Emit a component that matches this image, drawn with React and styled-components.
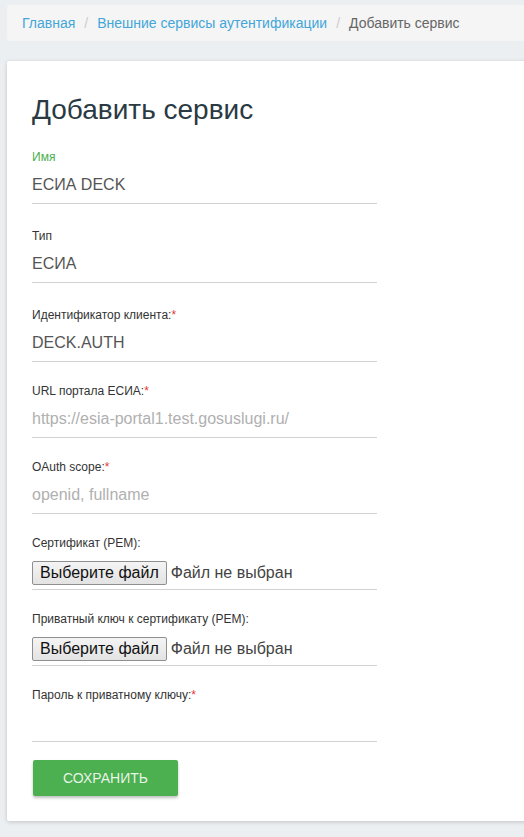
import styled, { createGlobalStyle } from 'styled-components'

const GlobalStyle = createGlobalStyle`
  html, body {
    margin: 0;
    padding: 0;
    background: #eceff1;
    font-family: "Liberation Sans", Arial, sans-serif;
    overflow-x: hidden;
  }
`

const fields = [
  { label: 'Имя', value: 'ЕСИА DECK', active: true, loose: true },
  { label: 'Тип', value: 'ЕСИА', loose: true },
  { label: 'Идентификатор клиента:', value: 'DECK.AUTH', required: true, loose: true },
  { label: 'URL портала ЕСИА:', placeholder: 'https://esia-portal1.test.gosuslugi.ru/', required: true },
  { label: 'OAuth scope:', placeholder: 'openid, fullname', required: true },
  { label: 'Сертификат (PEM):', file: true },
  { label: 'Приватный ключ к сертификату (PEM):', file: true },
  { label: 'Пароль к приватному ключу:', value: '', required: true },
]

function App() {
  return (
    <Page>
      <GlobalStyle />
      <Breadcrumb>
        <Crumb href="#">Главная</Crumb>
        <Separator>/</Separator>
        <Crumb href="#">Внешние сервисы аутентификации</Crumb>
        <Separator>/</Separator>
        <Current>Добавить сервис</Current>
      </Breadcrumb>
      <Card>
        <Title>Добавить сервис</Title>
        <Form>
          {fields.map((f) => (
            <Group key={f.label} loose={f.loose}>
              <Label active={f.active}>
                {f.label}
                {f.required && <Star>*</Star>}
              </Label>
              {f.file ? (
                <FileRow>
                  <FileButton type="button">Выберите файл</FileButton>
                  <FileName>Файл не выбран</FileName>
                </FileRow>
              ) : (
                <Input readOnly value={f.value || ''} placeholder={f.placeholder} />
              )}
            </Group>
          ))}
          <SaveButton type="button">Сохранить</SaveButton>
        </Form>
      </Card>
    </Page>
  )
}

const Page = styled.div`
  display: flex;
  flex-direction: column;
  gap: 20px;
  padding: 5px 0 16px 7px;
  margin-right: -20px;
`

const Breadcrumb = styled.div`
  display: flex;
  align-items: center;
  height: 36px;
  padding: 0 15px;
  background: #f5f5f5;
  border-radius: 4px;
  font-size: 14px;
`

const Crumb = styled.a`
  color: #43a6d9;
  text-decoration: none;
`

const Separator = styled.span`
  color: #ccc;
  padding: 0 9px;
`

const Current = styled.span`
  color: #666;
`

const Card = styled.div`
  background: #fff;
  border-radius: 2px;
  box-shadow: 0 1px 4px rgba(0, 0, 0, 0.18);
  padding: 32px 25px 25px;
`

const Title = styled.h1`
  margin: 0;
  font-size: 28px;
  line-height: 33px;
  font-weight: 400;
  color: #2a3a43;
`

const Form = styled.form`
  display: flex;
  flex-direction: column;
  width: 345px;
  margin-top: -1px;
`

const Group = styled.div`
  display: flex;
  flex-direction: column;
  margin-top: ${(p) => (p.loose ? '24px' : '21px')};
`

const Label = styled.label`
  font-size: 12px;
  line-height: 17px;
  color: ${(p) => (p.active ? '#4caf50' : '#333')};
`

const Star = styled.span`
  color: #e53935;
`

const Input = styled.input`
  box-sizing: border-box;
  height: 38px;
  padding: 0;
  border: none;
  border-bottom: 1px solid #d2d2d2;
  outline: none;
  background: transparent;
  font-family: "Liberation Sans", Arial, sans-serif;
  font-size: 16px;
  color: #555;

  &::placeholder {
    color: #b0b0b0;
  }
`

const FileRow = styled.div`
  box-sizing: border-box;
  height: 38px;
  display: flex;
  align-items: flex-end;
  gap: 4px;
  padding-bottom: 4px;
  border-bottom: 1px solid #d2d2d2;
`

const FileButton = styled.button`
  box-sizing: border-box;
  height: 24px;
  padding: 0 7px;
  margin: 0;
  border: 1px solid #8f8f8f;
  border-radius: 2px;
  background: linear-gradient(#f4f4f4, #e3e3e3);
  font-family: "Liberation Sans", Arial, sans-serif;
  font-size: 16px;
  line-height: 22px;
  color: #111;
`

const FileName = styled.span`
  font-size: 16px;
  line-height: 24px;
  color: #444;
`

const SaveButton = styled.button`
  align-self: flex-start;
  margin: 18px 0 0 1px;
  width: 145px;
  height: 36px;
  border: none;
  border-radius: 2px;
  background: #4caf50;
  box-shadow: 0 2px 3px rgba(0, 0, 0, 0.25);
  color: rgba(255, 255, 255, 0.88);
  font-family: "Liberation Sans", Arial, sans-serif;
  font-size: 14px;
  text-transform: uppercase;
`

export default App
